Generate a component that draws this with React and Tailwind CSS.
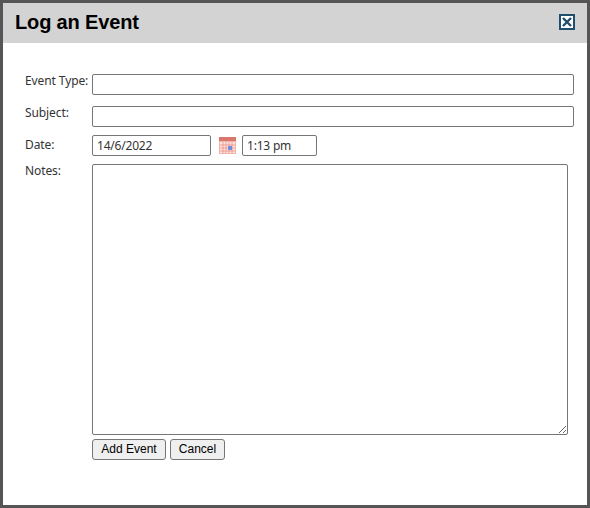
export default function App() {
  const label = "w-[67px] shrink-0 text-[12px] leading-[14px] tracking-[-0.1px] text-[#333333] [font-family:'Noto_Sans',sans-serif]";
  const input = "block h-[21px] rounded-[2px] border border-[#767676] bg-white px-1 text-[12px] tracking-[-0.2px] text-[#333333] outline-none [font-family:'Noto_Sans',sans-serif]";
  const btn = "h-[21px] rounded-[3px] border border-[#767676] bg-[#efefef] pb-[1px] text-[12px] leading-none text-black [font-family:'Liberation_Sans',sans-serif]";
  return (
    <div className="h-[508px] w-[590px] border-[3px] border-[#555555] bg-white">
      <div className="flex h-[40px] items-center justify-between bg-[#d3d3d3] pb-[2px] pl-[12px] pr-[12px]">
        <h1 className="text-[20px] font-bold leading-none tracking-[-0.15px] text-black [font-family:'Liberation_Sans',sans-serif]">Log an Event</h1>
        <button aria-label="Close" className="h-[16px] w-[16px] border-2 border-[#1f4e6e] bg-white p-0">
          <svg viewBox="0 0 12 12" className="block h-[12px] w-[12px]">
            <path d="M2 2 L10 10 M10 2 L2 10" stroke="#1f4e6e" strokeWidth="2.4" />
          </svg>
        </button>
      </div>
      <div className="pl-[22px] pt-[31px]">
        <div className="flex">
          <label className={label}>Event Type:</label>
          <input className={`${input} w-[482px]`} />
        </div>
        <div className="mt-[11px] flex">
          <label className={label}>Subject:</label>
          <input className={`${input} w-[482px]`} />
        </div>
        <div className="mt-[8px] flex items-start">
          <label className={`${label} pt-[3px]`}>Date:</label>
          <input className={`${input} h-[20px] w-[119px]`} defaultValue="14/6/2022" />
          <svg viewBox="0 0 17 17" className="ml-[8px] mt-[2px] h-[17px] w-[17px]">
            <rect x="0" y="0" width="17" height="17" fill="#f3b3ab" />
            <rect x="0" y="0" width="17" height="4" fill="#d9776c" />
            <rect x="1" y="5" width="15" height="11" fill="#fbe6e2" />
            <path d="M1 8H16M1 11H16M1 14H16M4 5V16M7 5V16M10 5V16M13 5V16" stroke="#ee9c93" strokeWidth="1" />
            <rect x="9" y="9" width="4" height="4" fill="#6f8fdc" />
          </svg>
          <input className={`${input} ml-[6px] h-[20px] w-[75px]`} defaultValue="1:13 pm" />
        </div>
        <div className="mt-[8px] flex items-start">
          <label className={label}>Notes:</label>
          <textarea className="block h-[271px] w-[476px] rounded-[2px] border border-[#767676] bg-white outline-none" />
        </div>
        <div className="ml-[67px] mt-[4px] flex gap-[4px]">
          <button className={`${btn} w-[74px]`}>Add Event</button>
          <button className={`${btn} w-[55px]`}>Cancel</button>
        </div>
      </div>
    </div>
  );
}
